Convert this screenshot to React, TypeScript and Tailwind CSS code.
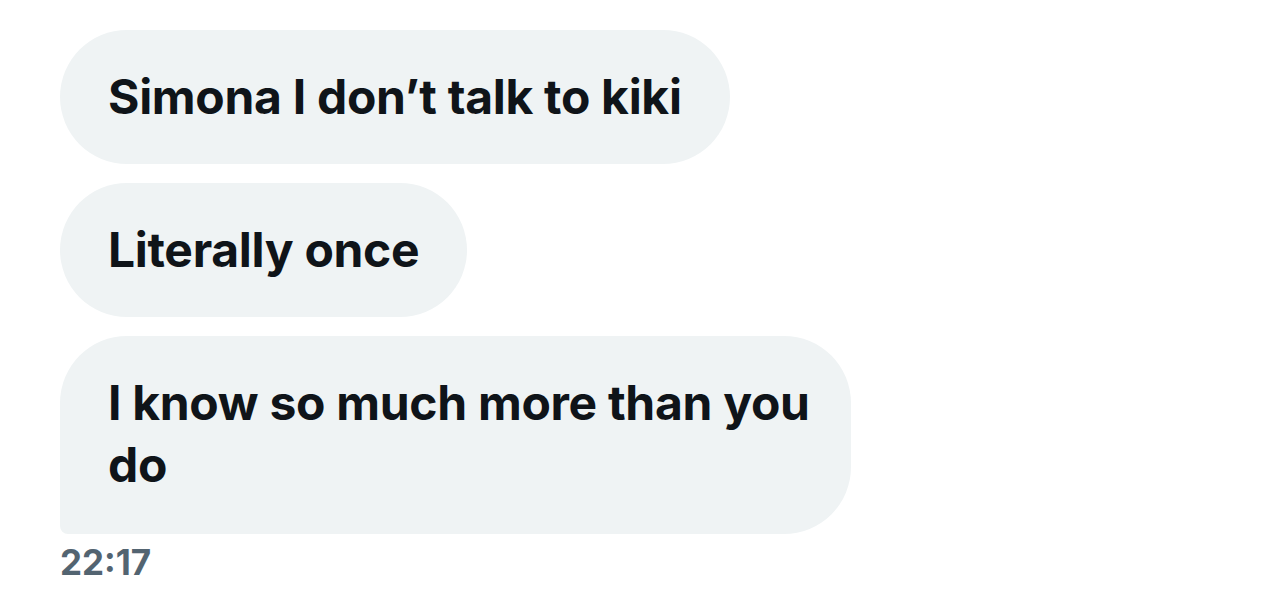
const messages = [
  { id: 1, text: "Simona I don’t talk to kiki", className: "px-12 rounded-[67px]" },
  { id: 2, text: "Literally once", className: "px-12 rounded-[67px]" },
  {
    id: 3,
    text: "I know so much more than you do",
    className: "w-[791px] pl-12 pr-4 pb-[38px] rounded-[67px] rounded-bl-[8px]",
  },
]

export default function App() {
  return (
    <div className="h-[597px] w-[1284px] overflow-hidden bg-white pl-[60px] pt-[30px] font-['Inter','Liberation_Sans',sans-serif]">
      <div className="flex flex-col items-start gap-[19px]">
        {messages.map((message) => (
          <div
            key={message.id}
            className={`bg-[#eff3f4] py-9 text-[48px] font-bold leading-[62px] tracking-[-0.3px] text-[#0f1419] ${message.className}`}
          >
            {message.text}
          </div>
        ))}
      </div>
      <p className="mt-[4px] text-[35px] font-bold leading-[48px] text-[#536471]">22:17</p>
    </div>
  )
}
